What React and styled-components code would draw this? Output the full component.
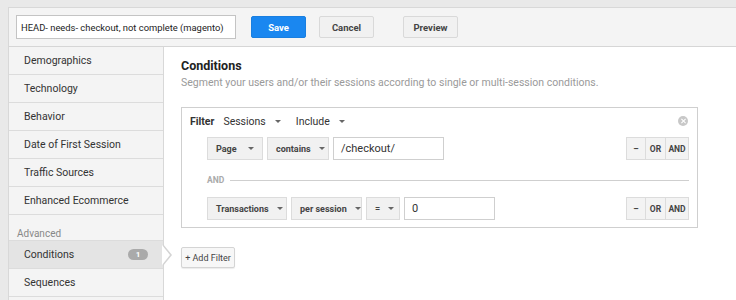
import React from 'react'
import styled, { createGlobalStyle } from 'styled-components'

const GlobalStyle = createGlobalStyle`
  html, body {
    margin: 0;
    padding: 0;
    background: #e9e9e9;
    font-family: Roboto, "Liberation Sans", Arial, sans-serif;
    color: #333;
  }
`

const Page = styled.div`
  width: 736px;
  height: 300px;
  overflow: hidden;
  padding: 7px 0 0 8px;
  box-sizing: border-box;
`

const Panel = styled.div`
  background: #fff;
  border-left: 1px solid #d8d8d8;
  border-top: 1px solid #d8d8d8;
  height: 100%;
  display: flex;
  flex-direction: column;
`

const TopBar = styled.div`
  background: #f4f4f4;
  border-bottom: 1px solid #d6d6d6;
  height: 38px;
  display: flex;
  align-items: center;
  padding-left: 7px;
  flex-shrink: 0;
`

const NameInput = styled.div`
  width: 220px;
  height: 24px;
  box-sizing: border-box;
  border: 1px solid #c4c4c4;
  background: #fff;
  display: flex;
  align-items: center;
  padding-left: 4px;
  font-size: 9.4px;
  color: #222;
  white-space: nowrap;
  margin-right: 15px;
`

const Button = styled.div`
  width: ${p => p.$w || 55}px;
  height: 22px;
  box-sizing: border-box;
  display: flex;
  align-items: center;
  justify-content: center;
  font-size: 9.5px;
  font-weight: 700;
  border-radius: 2px;
  margin-right: ${p => p.$mr || 0}px;
  background: ${p => (p.$primary ? '#1a87f0' : '#f1f1f1')};
  color: ${p => (p.$primary ? '#fff' : '#444')};
  border: 1px solid ${p => (p.$primary ? '#1a7fe0' : '#d9d9d9')};
`

const Body = styled.div`
  display: flex;
  flex: 1;
  min-height: 0;
`

const Sidebar = styled.div`
  width: 154px;
  background: #f4f4f4;
  border-right: 1px solid #d8d8d8;
  flex-shrink: 0;
  display: flex;
  flex-direction: column;
`

const NavItem = styled.div`
  position: relative;
  height: 27px;
  border-bottom: 1px solid #dcdcdc;
  display: flex;
  align-items: center;
  justify-content: space-between;
  padding: 0 15px 0 15px;
  font-size: 10.5px;
  color: #333;
  white-space: nowrap;
  background: ${p => (p.$active ? '#e4e4e4' : '#f4f4f4')};
  ${p => p.$active && 'border-top: 1px solid #dcdcdc;'}
`

const Arrow = styled.div`
  position: absolute;
  right: -9px;
  top: 3px;
  width: 0;
  height: 0;
  border-top: 11px solid transparent;
  border-bottom: 11px solid transparent;
  border-left: 9px solid #d4d4d4;
  &::after {
    content: '';
    position: absolute;
    left: -10px;
    top: -10px;
    border-top: 10px solid transparent;
    border-bottom: 10px solid transparent;
    border-left: 8px solid #fff;
  }
`

const Badge = styled.span`
  background: #aaa;
  color: #fff;
  font-size: 8px;
  font-weight: 700;
  border-radius: 6px;
  width: 20px;
  height: 11px;
  display: flex;
  align-items: center;
  justify-content: center;
`

const SectionLabel = styled.div`
  margin-top: 13px;
  padding-left: 8px;
  height: 12px;
  font-size: 10px;
  color: #888;
  line-height: 12px;
`

const Content = styled.div`
  flex: 1;
  padding: 11px 38px 0 17px;
`

const Title = styled.div`
  font-size: 12.5px;
  font-weight: 700;
  color: #222;
  line-height: 15px;
`

const Subtitle = styled.div`
  font-size: 10.5px;
  color: #9a9a9a;
  margin-top: 3px;
  line-height: 13px;
  white-space: nowrap;
`

const FilterBox = styled.div`
  margin-top: 18px;
  border: 1px solid #cfcfcf;
  height: 121px;
  box-sizing: border-box;
  padding: 6px 8px 0 8px;
`

const FilterHead = styled.div`
  display: flex;
  align-items: center;
  height: 14px;
  font-size: 10.5px;
  color: #333;
`

const Bold = styled.span`
  font-weight: 700;
  margin-right: 9px;
`

const Plain = styled.span`
  display: flex;
  align-items: center;
  margin-right: 15px;
`

const Caret = styled.span`
  display: inline-block;
  width: 0;
  height: 0;
  border-left: 3px solid transparent;
  border-right: 3px solid transparent;
  border-top: 3px solid ${p => p.$c || '#666'};
  margin-left: ${p => p.$ml || 8}px;
`

const CloseIcon = styled.span`
  margin-left: auto;
  margin-right: 1px;
  width: 10px;
  height: 10px;
  border-radius: 50%;
  background: #c8c8c8;
  position: relative;
  &::before, &::after {
    content: '';
    position: absolute;
    left: 4.5px;
    top: 2px;
    width: 1px;
    height: 6px;
    background: #fff;
    transform: rotate(45deg);
  }
  &::after {
    transform: rotate(-45deg);
  }
`

const Row = styled.div`
  display: flex;
  align-items: center;
  margin-left: 17px;
  margin-top: ${p => p.$mt || 0}px;
  height: 23px;
`

const Select = styled.div`
  width: ${p => p.$w}px;
  height: 23px;
  box-sizing: border-box;
  background: #f1f1f1;
  border: 1px solid #dcdcdc;
  display: flex;
  align-items: center;
  justify-content: space-between;
  padding: 0 8px 0 8px;
  margin-right: 4px;
  font-size: 9px;
  font-weight: 700;
  color: #444;
  white-space: nowrap;
`

const ValueInput = styled.div`
  width: ${p => p.$w}px;
  height: 23px;
  box-sizing: border-box;
  border: 1px solid #cfcfcf;
  background: #fff;
  display: flex;
  align-items: center;
  padding-left: 7px;
  font-size: 11px;
  color: #333;
`

const Ops = styled.div`
  margin-left: auto;
  display: flex;
`

const Op = styled.div`
  width: ${p => p.$w}px;
  height: 23px;
  box-sizing: border-box;
  background: #f3f3f3;
  border: 1px solid #dcdcdc;
  margin-left: -1px;
  display: flex;
  align-items: center;
  justify-content: center;
  font-size: 8.5px;
  font-weight: 700;
  color: #444;
`

const Divider = styled.div`
  display: flex;
  align-items: center;
  margin: 14px 0 0 17px;
  height: 12px;
  font-size: 8.5px;
  color: #aaa;
  font-weight: 700;
  &::after {
    content: '';
    flex: 1;
    height: 1px;
    background: #cfcfcf;
    margin-left: 6px;
  }
`

const AddFilter = styled.div`
  margin-top: 19px;
  width: 54px;
  height: 21px;
  box-sizing: border-box;
  border: 1px solid #d4d4d4;
  border-radius: 2px;
  background: #f7f7f7;
  box-shadow: 0 1px 1px rgba(0, 0, 0, 0.08);
  display: flex;
  align-items: center;
  justify-content: center;
  font-size: 9px;
  color: #444;
`

const navItems = [
  'Demographics',
  'Technology',
  'Behavior',
  'Date of First Session',
  'Traffic Sources',
  'Enhanced Ecommerce',
]

function OpGroup() {
  return (
    <Ops>
      <Op $w={20}>–</Op>
      <Op $w={21}>OR</Op>
      <Op $w={24}>AND</Op>
    </Ops>
  )
}

export default function App() {
  return (
    <Page>
      <GlobalStyle />
      <Panel>
        <TopBar>
          <NameInput>HEAD- needs- checkout, not complete (magento)</NameInput>
          <Button $primary $mr={13}>Save</Button>
          <Button $mr={29}>Cancel</Button>
          <Button>Preview</Button>
        </TopBar>
        <Body>
          <Sidebar>
            {navItems.map(n => (
              <NavItem key={n}>{n}</NavItem>
            ))}
            <SectionLabel>Advanced</SectionLabel>
            <NavItem $active>
              Conditions
              <Badge>1</Badge>
              <Arrow />
            </NavItem>
            <NavItem>Sequences</NavItem>
          </Sidebar>
          <Content>
            <Title>Conditions</Title>
            <Subtitle>
              Segment your users and/or their sessions according to single or multi-session conditions.
            </Subtitle>
            <FilterBox>
              <FilterHead>
                <Bold>Filter</Bold>
                <Plain>Sessions<Caret $ml={9} /></Plain>
                <Plain>Include<Caret $ml={9} /></Plain>
                <CloseIcon />
              </FilterHead>
              <Row $mt={9}>
                <Select $w={56}>Page<Caret /></Select>
                <Select $w={62}>contains<Caret /></Select>
                <ValueInput $w={111}>/checkout/</ValueInput>
                <OpGroup />
              </Row>
              <Divider>AND</Divider>
              <Row $mt={11}>
                <Select $w={80}>Transactions<Caret /></Select>
                <Select $w={71}>per session<Caret /></Select>
                <Select $w={34}>=<Caret /></Select>
                <ValueInput $w={91}>0</ValueInput>
                <OpGroup />
              </Row>
            </FilterBox>
            <AddFilter>+ Add Filter</AddFilter>
          </Content>
        </Body>
      </Panel>
    </Page>
  )
}
